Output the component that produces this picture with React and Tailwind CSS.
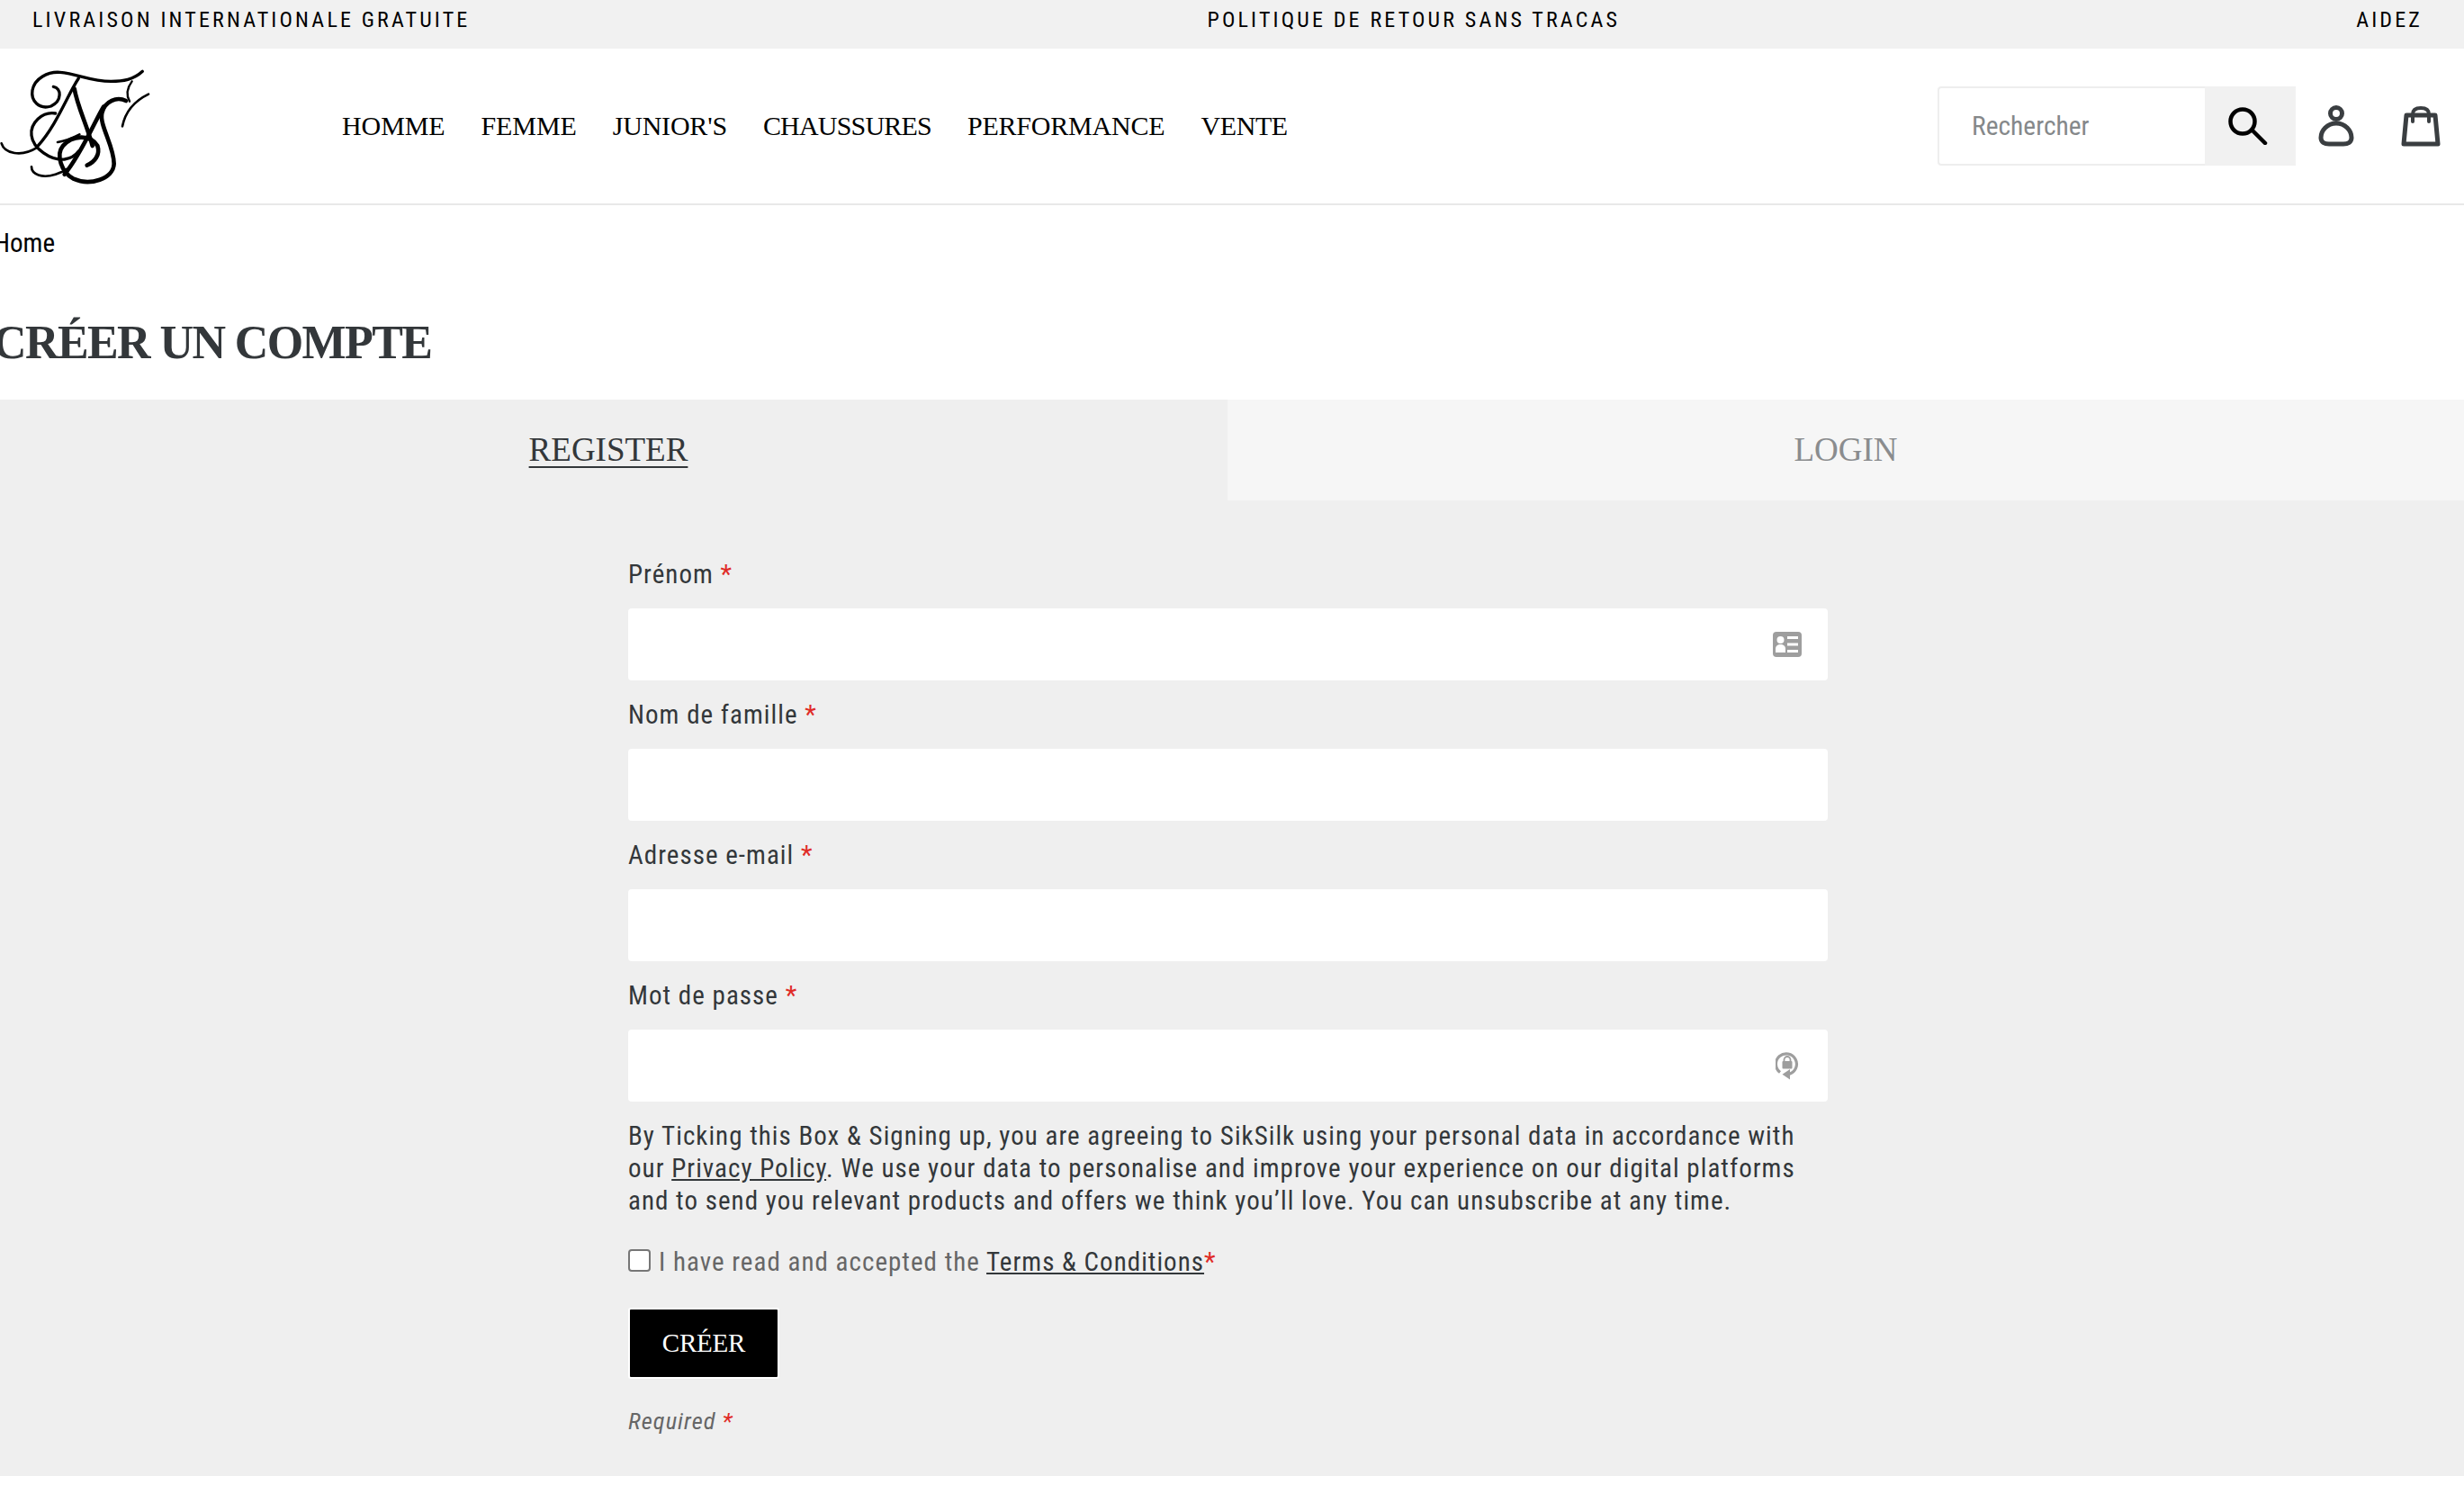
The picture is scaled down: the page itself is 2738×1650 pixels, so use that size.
import React from "react";

const sans = "font-['Roboto',sans-serif] font-stretch-[75%]";
const serif = "font-['Liberation_Serif',serif]";

const navItems = [
  { label: "HOMME", className: "tracking-[-0.1px]" },
  { label: "FEMME", className: "tracking-[-0.1px]" },
  { label: "JUNIOR'S", className: "tracking-[-0.2px]" },
  { label: "CHAUSSURES", className: "tracking-[-0.8px]" },
  { label: "PERFORMANCE", className: "tracking-[-0.2px]" },
  { label: "VENTE", className: "tracking-[-0.4px]" },
];

const Logo = () => (
  <svg viewBox="0 0 540 480" className="w-[180px] h-[160px] mt-[4px]" fill="none" stroke="#000" strokeLinecap="round">
    <g strokeWidth="10">
      <path d="M178 103C205 108 208 150 170 168C130 180 102 150 108 115C115 75 160 52 200 55C260 60 300 85 370 85C410 85 445 80 475 52" />
      <path d="M262 75C225 130 190 230 125 302" />
      <path d="M185 192C140 185 100 225 105 265C110 310 170 350 215 345C235 342 250 335 262 318" />
      <path d="M5 292C15 325 70 340 125 305" strokeWidth="8" />
      <path d="M105 370C105 395 140 410 185 395C200 390 215 385 222 378" strokeWidth="8" />
      <path d="M192 288C210 285 240 275 265 262" strokeWidth="8" />
      <path d="M495 128C460 145 420 175 408 235" strokeWidth="8" />
      <path d="M440 85C425 105 420 130 432 152" strokeWidth="7" />
    </g>
    <g strokeWidth="14">
      <path d="M248 110C258 170 290 230 308 300" />
      <path d="M420 150C390 135 350 150 340 190C330 230 380 300 380 360C378 410 300 435 245 410C205 390 185 330 210 300C240 265 300 260 325 300C335 330 315 355 290 365" />
      <path d="M345 170C320 210 270 330 215 395" />
    </g>
  </svg>
);

const SearchIcon = () => (
  <svg viewBox="0 0 44 42" className="w-[44px] h-[42px] -ml-[5px]" fill="none" stroke="#000" strokeWidth="4.5" strokeLinecap="round">
    <circle cx="16" cy="16" r="13.5" />
    <path d="M27 26L41 40" />
  </svg>
);

const UserIcon = () => (
  <svg viewBox="0 0 40 46" className="w-[40px] h-[46px]" fill="none" stroke="#3a3e41" strokeWidth="5">
    <circle cx="20" cy="9" r="6.5" />
    <path d="M20 20C10 20 3 28 3 36C3 41 7 43 12 43H28C33 43 37 41 37 36C37 28 30 20 20 20Z" />
  </svg>
);

const BagIcon = () => (
  <svg viewBox="0 0 44 46" className="w-[44px] h-[46px]" fill="none" stroke="#3a3e41" strokeWidth="5" strokeLinejoin="round" strokeLinecap="round">
    <path d="M6 11H38L41 43H3Z" />
    <path d="M13 18V10C13 5 17 3 22 3C27 3 31 5 31 10V18" strokeWidth="4" />
  </svg>
);

const CardIcon = () => (
  <svg viewBox="0 0 32 28" className="w-[32px] h-[28px]">
    <rect width="32" height="28" rx="4" fill="#9e9e9e" />
    <circle cx="8.5" cy="9" r="4" fill="#fff" />
    <path d="M3 23V19C3 15.5 5.5 14 8.5 14C11.5 14 14 15.5 14 19V23Z" fill="#fff" />
    <path d="M16 5H28V8H16ZM16 12.5H28V15.5H16ZM16 20H28V23H16Z" fill="#fff" />
  </svg>
);

const LockIcon = () => (
  <svg viewBox="0 0 26 32" className="w-[26px] h-[32px]">
    <path d="M5 23.5A11.5 11.5 0 1 1 15 25.4" fill="none" stroke="#9e9e9e" strokeWidth="3.2" />
    <path d="M16 20V31.5L7.5 25.8Z" fill="#9e9e9e" />
    <rect x="7.5" y="11" width="11" height="8.5" rx="1" fill="#9e9e9e" />
    <path d="M9.5 11V9.5A3.5 3.5 0 0 1 16.5 9.5V11" fill="none" stroke="#9e9e9e" strokeWidth="1.8" />
  </svg>
);

const Star = () => <span className="text-[#e02b27]">*</span>;

const Field = ({ label, type = "text", icon, iconClass = "right-[29px]" }) => (
  <div className="mb-[20px]">
    <label className="block h-[36px] leading-[36px] mb-[20px] text-[#33373a]">
      {label} <Star />
    </label>
    <div className="relative">
      <input type={type} className="block w-full h-[80px] bg-white rounded-[4px] outline-none" />
      {icon && <div className={`absolute ${iconClass} top-0 h-full flex items-center`}>{icon}</div>}
    </div>
  </div>
);

export default function App() {
  return (
    <div className={`${sans} bg-white min-h-[1650px] overflow-hidden`}>
      <div className="h-[54px] bg-[#f1f1f1] pl-[36px] pr-[46px] flex items-center text-[24px] tracking-[3.17px] text-black pb-[10px]">
        <span>LIVRAISON INTERNATIONALE GRATUITE</span>
        <span className="ml-[819px]">POLITIQUE DE RETOUR SANS TRACAS</span>
        <span className="ml-auto">AIDEZ</span>
      </div>

      <header className="h-[174px] border-b-2 border-[#e8e8e8] flex items-center pr-[26px]">
        <div className="w-[380px] shrink-0">
          <Logo />
        </div>
        <nav className={`${serif} flex gap-[40px] text-[30px] text-black -mt-[2px]`}>
          {navItems.map((item) => (
            <span key={item.label} className={item.className}>{item.label}</span>
          ))}
        </nav>
        <div className="ml-auto flex items-center">
          <div className="flex h-[88px] w-[398px]">
            <input
              placeholder="Rechercher"
              className="w-[297px] h-full border-2 border-r-0 border-[#eeeeee] rounded-l-[4px] pl-[36px] text-[29.5px] text-black placeholder:text-[#85888a] outline-none"
            />
            <button className="w-[101px] h-full bg-[#f1f1f1] flex items-center justify-center">
              <SearchIcon />
            </button>
          </div>
          <div className="ml-[25px]"><UserIcon /></div>
          <div className="ml-[52px]"><BagIcon /></div>
        </div>
      </header>

      <div className="h-[88px] pt-[24px] text-[29px] leading-[36px] text-black -ml-[7px]">Home</div>

      <h1 className={`${serif} -ml-[8px] h-[128px] pt-[33px] font-bold text-[52px] tracking-[-1.6px] leading-[64px] text-[#33373a]`}>
        CRÉER UN COMPTE
      </h1>

      <div className={`${serif} flex h-[112px] text-[37px]`}>
        <div className="w-[1364px] bg-[#efefef] flex items-center justify-center pr-[12px] text-[#33373a]">
          <span className="underline underline-offset-[6px] decoration-2">REGISTER</span>
        </div>
        <div className="flex-1 bg-[#f6f6f6] flex items-center justify-center text-[#8a8c8e]">
          <span>LOGIN</span>
        </div>
      </div>

      <div className="bg-[#efefef] h-[1084px] pl-[698px] pt-[64px] text-[29px] tracking-[1.03px]">
        <div className="w-[1333px]">
          <Field label="Prénom" icon={<CardIcon />} />
          <Field label="Nom de famille" />
          <Field label="Adresse e-mail" type="email" />
          <Field label="Mot de passe" type="password" icon={<LockIcon />} iconClass="right-[32px]" />

          <p className="leading-[36px] text-[#33373a]">
            By Ticking this Box &amp; Signing up, you are agreeing to SikSilk using your personal data in accordance with
            our <a className="underline">Privacy Policy</a>. We use your data to personalise and improve your experience on our digital platforms
            and to send you relevant products and offers we think you’ll love. You can unsubscribe at any time.
          </p>

          <div className="mt-[33px] flex items-center h-[36px] text-[#666666]">
            <input type="checkbox" className="appearance-none bg-white border-2 border-[#767676] rounded-[4px] w-[25px] h-[25px] mr-[9px] -mt-[5px]" />
            <span>
              I have read and accepted the <a className="underline text-[#33373a]">Terms &amp; Conditions</a>
              <Star />
            </span>
          </div>

          <button className={`${serif} mt-[32px] block w-[168px] h-[79px] bg-black border-2 border-white rounded-[3px] text-white text-[29px] tracking-[-0.2px]`}>
            CRÉER
          </button>

          <div className="mt-[29px] h-[36px] leading-[36px] italic text-[26.5px] text-[#666666]">
            Required <Star />
          </div>
        </div>
      </div>
    </div>
  );
}
